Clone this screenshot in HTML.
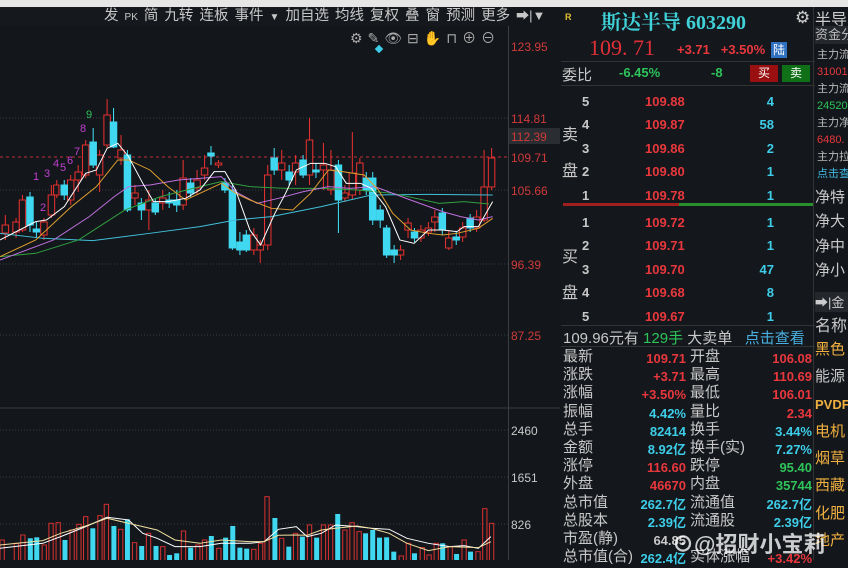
<!DOCTYPE html>
<html><head><meta charset="utf-8"><style>
*{margin:0;padding:0;box-sizing:border-box}
body{width:848px;height:560px;overflow:hidden;background:#13161b;font-family:"Liberation Sans","Noto Sans CJK SC",sans-serif;position:relative}
.a{position:absolute;white-space:nowrap}
.cn{font-family:"Liberation Sans","Noto Sans CJK SC",sans-serif}
.r{color:#e8383d}.g{color:#2ec45a}.c{color:#3dcde8}.w{color:#c8c8c8}.o{color:#f0b040}
.num{font-weight:bold;font-size:13px}
</style></head><body>
<div class="a" style="left:0;top:0;width:848px;height:7px;background:#e6e6e6"></div>
<div class="a" style="left:0;top:7px;width:508px;height:19px;background:#15181d"></div>
<div class="a w cn" style="left:104px;top:4px;font-size:14.5px;color:#c8c8c8;word-spacing:2px">发 <span style="font-size:10px">PK</span> 简 九转 连板 事件 <span style="font-size:10px">▼</span> 加自选 均线 复权 叠 窗 预测 更多 <span style="font-size:13px">➡|▼</span></div>
<div class="a" style="left:350px;top:28px;font-size:14px;color:#aaa;letter-spacing:5px">⚙✎👁⊟✋⊓⊕⊖</div>
<div class="a" style="left:376px;top:46px;width:6px;height:6px;background:#3dcde8;transform:rotate(45deg)"></div>

<svg class="a" style="left:0;top:0" width="560" height="560">
<g stroke="#3a3d42" stroke-dasharray="1 2" stroke-width="1">
<line x1="0" y1="118" x2="508" y2="118"/><line x1="0" y1="190" x2="508" y2="190"/><line x1="0" y1="264" x2="508" y2="264"/><line x1="0" y1="335" x2="508" y2="335"/><line x1="0" y1="430" x2="508" y2="430"/><line x1="0" y1="477" x2="508" y2="477"/><line x1="0" y1="524" x2="508" y2="524"/>
</g>
<line x1="0" y1="157" x2="508" y2="157" stroke="#c03038" stroke-dasharray="3 3"/>
<line x1="0" y1="408" x2="560" y2="408" stroke="#3a3d42"/>
<line x1="508.5" y1="26" x2="508.5" y2="560" stroke="#3a3d42"/>
<line x1="560.5" y1="7" x2="560.5" y2="560" stroke="#3a3d42"/>
<rect x="509" y="128" width="51" height="16" fill="#2a2d32"/>
<g fill="#d03a3a" font-size="12" font-family="Liberation Sans">
<text x="511" y="51">123.95</text><text x="511" y="123">114.81</text><text x="511" y="141">112.39</text><text x="511" y="162">109.71</text><text x="511" y="195">105.66</text><text x="511" y="269">96.39</text><text x="511" y="340">87.25</text>
</g>
<g fill="#c8c8c8" font-size="12" font-family="Liberation Sans"><text x="511" y="435">2460</text><text x="511" y="482">1651</text><text x="511" y="529">826</text></g>
<g font-size="11" font-family="Liberation Sans" fill="#c040d0"><text x="33" y="180">1</text><text x="40" y="211">2</text><text x="44" y="177">3</text><text x="53" y="167">4</text><text x="60" y="171">5</text><text x="67" y="164">6</text><text x="74" y="155">7</text><text x="80" y="132">8</text><text x="86" y="118" fill="#2ec45a">9</text></g>
<g transform="scale(1.071,1)" stroke-width="1">
<g stroke="#e0302f" fill="#13161b">
<line x1="5" y1="215" x2="5" y2="240"/><rect x="2" y="225" width="6" height="8"/>
<line x1="15" y1="218" x2="15" y2="238"/><rect x="12" y="222" width="6" height="10"/>
<line x1="21" y1="195" x2="21" y2="232"/><rect x="18" y="200" width="6" height="30"/>
<line x1="41" y1="218" x2="41" y2="240"/><rect x="38" y="222" width="6" height="13"/>
<line x1="48" y1="185" x2="48" y2="218"/><rect x="45" y="195" width="6" height="20"/>
<line x1="53" y1="180" x2="53" y2="198"/><rect x="50" y="185" width="5" height="10"/>
<line x1="66" y1="175" x2="66" y2="205"/><rect x="63" y="180" width="6" height="20"/>
<line x1="73" y1="165" x2="73" y2="192"/><rect x="70" y="172" width="6" height="8"/>
<line x1="80" y1="140" x2="80" y2="178"/><rect x="77" y="145" width="6" height="30"/>
<line x1="93" y1="150" x2="93" y2="192"/><rect x="90" y="155" width="6" height="20"/>
<line x1="100" y1="99" x2="100" y2="148"/><rect x="97" y="115" width="6" height="30"/>
<line x1="113" y1="135" x2="113" y2="165"/><rect x="110" y="150" width="6" height="8"/>
<line x1="126" y1="185" x2="126" y2="205"/><rect x="123" y="193" width="6" height="5"/>
<line x1="139" y1="190" x2="139" y2="230"/><rect x="136" y="200" width="6" height="10"/>
<line x1="152" y1="190" x2="152" y2="210"/><rect x="149" y="198" width="6" height="5"/>
<line x1="171" y1="160" x2="171" y2="210"/><rect x="168" y="178" width="6" height="27"/>
<line x1="184" y1="170" x2="184" y2="195"/><rect x="181" y="180" width="6" height="8"/>
<line x1="191" y1="155" x2="191" y2="180"/><rect x="188" y="168" width="6" height="7"/>
<line x1="204" y1="160" x2="204" y2="168"/><rect x="201" y="163" width="6" height="2"/>
<line x1="237" y1="228" x2="237" y2="255"/><rect x="234" y="235" width="6" height="15"/>
<line x1="243" y1="240" x2="243" y2="263"/><rect x="240" y="245" width="6" height="5"/>
<line x1="250" y1="165" x2="250" y2="250"/><rect x="247" y="175" width="6" height="70"/>
<line x1="263" y1="150" x2="263" y2="180"/><rect x="260" y="163" width="6" height="7"/>
<line x1="276" y1="155" x2="276" y2="185"/><rect x="273" y="163" width="6" height="9"/>
<line x1="289" y1="118" x2="289" y2="185"/><rect x="286" y="140" width="6" height="35"/>
<line x1="302" y1="143" x2="302" y2="190"/><rect x="299" y="165" width="6" height="5"/>
<line x1="309" y1="150" x2="309" y2="195"/><rect x="306" y="170" width="6" height="20"/>
<line x1="322" y1="185" x2="322" y2="202"/><rect x="319" y="193" width="6" height="5"/>
<line x1="329" y1="132" x2="329" y2="200"/><rect x="326" y="173" width="6" height="22"/>
<line x1="336" y1="158" x2="336" y2="195"/><rect x="333" y="163" width="6" height="27"/>
<line x1="374" y1="245" x2="374" y2="260"/><rect x="371" y="250" width="6" height="5"/>
<line x1="381" y1="218" x2="381" y2="238"/><rect x="378" y="223" width="6" height="7"/>
<line x1="393" y1="225" x2="393" y2="242"/><rect x="390" y="230" width="6" height="8"/>
<line x1="400" y1="222" x2="400" y2="236"/><rect x="397" y="228" width="6" height="4"/>
<line x1="406" y1="210" x2="406" y2="232"/><rect x="403" y="217" width="6" height="5"/>
<line x1="419" y1="230" x2="419" y2="250"/><rect x="416" y="238" width="6" height="10"/>
<line x1="432" y1="222" x2="432" y2="242"/><rect x="429" y="228" width="6" height="9"/>
<line x1="445" y1="210" x2="445" y2="232"/><rect x="442" y="217" width="6" height="11"/>
<line x1="452" y1="150" x2="452" y2="222"/><rect x="449" y="187" width="6" height="33"/>
<line x1="459" y1="148" x2="459" y2="190"/><rect x="456" y="158" width="6" height="29"/>
</g>
<g fill="#3fd8f0" stroke="#3fd8f0">
<line x1="28" y1="192" x2="28" y2="232"/><rect x="25" y="197" width="6" height="28"/>
<line x1="34" y1="222" x2="34" y2="238"/><rect x="31" y="229" width="6" height="3"/>
<line x1="60" y1="180" x2="60" y2="200"/><rect x="57" y="185" width="6" height="10"/>
<line x1="87" y1="128" x2="87" y2="168"/><rect x="84" y="142" width="6" height="23"/>
<line x1="106" y1="108" x2="106" y2="148"/><rect x="103" y="122" width="6" height="25"/>
<line x1="119" y1="150" x2="119" y2="212"/><rect x="116" y="155" width="6" height="55"/>
<line x1="132" y1="198" x2="132" y2="220"/><rect x="129" y="203" width="6" height="7"/>
<line x1="145" y1="198" x2="145" y2="215"/><rect x="142" y="203" width="6" height="9"/>
<line x1="158" y1="192" x2="158" y2="208"/><rect x="155" y="200" width="6" height="3"/>
<line x1="165" y1="190" x2="165" y2="212"/><rect x="162" y="200" width="6" height="5"/>
<line x1="178" y1="178" x2="178" y2="197"/><rect x="175" y="183" width="6" height="10"/>
<line x1="197" y1="146" x2="197" y2="165"/><rect x="194" y="153" width="6" height="3"/>
<line x1="210" y1="178" x2="210" y2="193"/><rect x="207" y="183" width="6" height="7"/>
<line x1="217" y1="185" x2="217" y2="250"/><rect x="214" y="190" width="6" height="58"/>
<line x1="224" y1="232" x2="224" y2="255"/><rect x="221" y="242" width="6" height="8"/>
<line x1="230" y1="230" x2="230" y2="252"/><rect x="227" y="235" width="6" height="15"/>
<line x1="256" y1="148" x2="256" y2="175"/><rect x="253" y="158" width="6" height="12"/>
<line x1="270" y1="165" x2="270" y2="185"/><rect x="267" y="172" width="6" height="8"/>
<line x1="283" y1="155" x2="283" y2="178"/><rect x="280" y="160" width="6" height="15"/>
<line x1="295" y1="163" x2="295" y2="178"/><rect x="292" y="170" width="6" height="2"/>
<line x1="316" y1="160" x2="316" y2="233"/><rect x="313" y="165" width="6" height="35"/>
<line x1="342" y1="172" x2="342" y2="195"/><rect x="339" y="178" width="6" height="12"/>
<line x1="348" y1="172" x2="348" y2="225"/><rect x="345" y="178" width="6" height="42"/>
<line x1="355" y1="205" x2="355" y2="228"/><rect x="352" y="210" width="6" height="10"/>
<line x1="361" y1="225" x2="361" y2="258"/><rect x="358" y="228" width="6" height="27"/>
<line x1="368" y1="245" x2="368" y2="263"/><rect x="365" y="250" width="6" height="5"/>
<line x1="387" y1="228" x2="387" y2="242"/><rect x="384" y="232" width="6" height="6"/>
<line x1="413" y1="208" x2="413" y2="235"/><rect x="410" y="213" width="6" height="17"/>
<line x1="426" y1="232" x2="426" y2="245"/><rect x="423" y="237" width="6" height="3"/>
<line x1="439" y1="214" x2="439" y2="232"/><rect x="436" y="218" width="6" height="10"/>
</g>
</g>
<g transform="scale(0.357,0.3333)" fill="none" stroke-width="1">
<polyline vector-effect="non-scaling-stroke" stroke="#40c0d8" points="0,700 120,715 260,722 420,700 560,680 660,660 760,650 900,620 1040,585 1200,583 1380,585"/>
<polyline vector-effect="non-scaling-stroke" stroke="#30a040" points="0,770 100,760 220,720 350,630 450,590 560,560 620,545 700,560 800,565 900,565 1000,570 1100,580 1230,610 1300,605 1370,612"/>
<polyline vector-effect="non-scaling-stroke" stroke="#c070e0" points="0,780 150,720 250,650 320,590 360,560 420,555 500,540 560,535 620,530 660,575 720,610 780,595 850,575 920,560 980,565 1050,560 1150,600 1240,635 1290,650 1340,660 1380,650"/>
<polyline vector-effect="non-scaling-stroke" stroke="#e0a030" points="0,770 100,720 200,620 270,560 330,480 360,480 420,510 470,560 520,600 560,580 620,550 660,580 700,600 760,625 820,630 870,580 920,510 960,515 1020,525 1060,570 1100,640 1150,690 1200,700 1240,705 1280,700 1340,685 1380,655"/>
<polyline vector-effect="non-scaling-stroke" stroke="#ffffff" points="0,720 100,665 130,660 180,620 240,520 270,510 300,445 330,430 360,470 400,550 430,605 470,605 520,595 560,570 600,515 630,515 660,570 700,690 730,735 770,640 800,580 830,510 870,490 910,490 940,500 970,550 1010,550 1040,565 1080,620 1120,720 1160,730 1200,690 1240,690 1280,695 1300,680 1340,680 1380,605"/>
</g>
<g transform="translate(0,280) scale(0.357,0.3333)">
<g fill="none" stroke="#d03030" stroke-width="3">
<rect x="0" y="780" width="12" height="70"/><rect x="40" y="790" width="12" height="60"/><rect x="58" y="765" width="12" height="85"/><rect x="118" y="795" width="12" height="55"/><rect x="137" y="730" width="12" height="120"/><rect x="157" y="728" width="12" height="122"/><rect x="196" y="750" width="12" height="100"/><rect x="215" y="733" width="12" height="117"/><rect x="234" y="710" width="12" height="140"/><rect x="274" y="707" width="12" height="143"/><rect x="292" y="673" width="12" height="177"/><rect x="332" y="748" width="12" height="102"/><rect x="371" y="788" width="12" height="62"/><rect x="410" y="760" width="12" height="90"/><rect x="450" y="800" width="12" height="50"/><rect x="508" y="753" width="12" height="97"/><rect x="548" y="795" width="12" height="55"/><rect x="567" y="780" width="12" height="70"/><rect x="607" y="805" width="12" height="45"/><rect x="705" y="808" width="12" height="42"/><rect x="724" y="790" width="12" height="60"/><rect x="742" y="650" width="12" height="200"/><rect x="783" y="775" width="12" height="75"/><rect x="822" y="760" width="12" height="90"/><rect x="861" y="735" width="12" height="115"/><rect x="900" y="735" width="12" height="115"/><rect x="920" y="735" width="12" height="115"/><rect x="960" y="750" width="12" height="100"/><rect x="980" y="728" width="12" height="122"/><rect x="1000" y="755" width="12" height="95"/><rect x="1118" y="828" width="12" height="22"/><rect x="1138" y="790" width="12" height="60"/><rect x="1177" y="803" width="12" height="47"/><rect x="1196" y="825" width="12" height="25"/><rect x="1216" y="790" width="12" height="60"/><rect x="1255" y="800" width="12" height="50"/><rect x="1294" y="780" width="12" height="70"/><rect x="1333" y="815" width="12" height="35"/><rect x="1352" y="686" width="12" height="164"/><rect x="1371" y="730" width="12" height="120"/>
</g>
<g fill="#3fd8f0">
<rect x="78" y="775" width="14" height="75"/><rect x="96" y="772" width="14" height="78"/><rect x="175" y="780" width="14" height="70"/><rect x="253" y="745" width="14" height="105"/><rect x="312" y="738" width="14" height="112"/><rect x="350" y="718" width="14" height="132"/><rect x="390" y="798" width="14" height="52"/><rect x="430" y="798" width="14" height="52"/><rect x="468" y="825" width="14" height="25"/><rect x="488" y="820" width="14" height="30"/><rect x="527" y="803" width="14" height="47"/><rect x="585" y="768" width="14" height="82"/><rect x="625" y="773" width="14" height="77"/><rect x="645" y="738" width="14" height="112"/><rect x="665" y="803" width="14" height="47"/><rect x="684" y="806" width="14" height="44"/><rect x="763" y="714" width="14" height="136"/><rect x="802" y="800" width="14" height="50"/><rect x="840" y="770" width="14" height="80"/><rect x="880" y="773" width="14" height="77"/><rect x="939" y="702" width="14" height="148"/><rect x="1017" y="760" width="14" height="90"/><rect x="1037" y="750" width="14" height="100"/><rect x="1056" y="773" width="14" height="77"/><rect x="1076" y="772" width="14" height="78"/><rect x="1096" y="815" width="14" height="35"/><rect x="1154" y="820" width="14" height="30"/><rect x="1233" y="790" width="14" height="60"/><rect x="1272" y="822" width="14" height="28"/><rect x="1311" y="815" width="14" height="35"/>
</g>
<polyline vector-effect="non-scaling-stroke" fill="none" stroke="#ffffff" points="0,805 120,790 170,770 240,740 300,712 360,720 400,760 440,775 490,800 560,800 620,790 700,790 740,785 780,748 830,740 860,770 900,760 940,735 1000,740 1040,745 1090,748 1140,775 1200,790 1260,800 1300,797 1340,805 1375,770"/>
<polyline vector-effect="non-scaling-stroke" fill="none" stroke="#f0e0a0" points="0,795 120,782 170,760 240,738 300,715 360,730 400,740 440,750 490,780 560,790 620,780 700,785 740,785 780,766 830,765 860,766 900,750 940,745 1000,738 1040,745 1090,760 1140,790 1200,812 1260,800 1340,803 1375,785"/>
</g>
</svg>

<!-- right panel -->
<div class="a" style="left:561px;top:7px;width:254px;height:553px;background:#14171c"></div>
<div class="a" style="left:565px;top:12px;font-size:9px;color:#e0c030;font-weight:bold">R</div>
<div class="a c" style="left:601px;top:6px;font-size:20px;font-weight:bold;font-family:'Liberation Serif','Noto Serif CJK SC',serif;color:#40d0d8">斯达半导 603290</div>
<div class="a" style="left:795px;top:8px;font-size:17px;color:#ccc">⚙</div>
<div class="a r" style="left:589px;top:35px;font-size:22px;font-family:'Liberation Serif',serif;color:#e03038">109. 71</div>
<div class="a r" style="left:677px;top:42px;font-size:13px;font-weight:bold">+3.71&nbsp;&nbsp;&nbsp;+3.50%</div>
<div class="a" style="left:771px;top:42px;width:16px;height:16px;background:#3070c0;color:#fff;font-size:12px;text-align:center;line-height:16px">陆</div>
<div class="a" style="left:561px;top:61px;width:254px;height:1px;background:#333"></div>
<div class="a w" style="left:562px;top:64px;font-size:15px">委比</div>
<div class="a g" style="left:619px;top:65px;font-size:13px;font-weight:bold">-6.45%</div>
<div class="a g" style="left:711px;top:65px;font-size:13px;font-weight:bold">-8</div>
<div class="a" style="left:750px;top:65px;width:28px;height:17px;background:#9a1010;color:#fff;font-size:12px;text-align:center;line-height:17px">买</div>
<div class="a" style="left:782px;top:65px;width:28px;height:17px;background:#107018;color:#fff;font-size:12px;text-align:center;line-height:17px">卖</div>
<div class="a" style="left:561px;top:85px;width:254px;height:1px;background:#333"></div>
<div class="a w" style="left:562px;top:118px;font-size:16px;line-height:36px">卖<br>盘</div>
<div class="a w" style="left:562px;top:240px;font-size:16px;line-height:36px">买<br>盘</div>
<div class="a num w" style="left:582px;top:90px;line-height:23.4px">5<br>4<br>3<br>2<br>1</div>
<div class="a num r" style="left:645px;top:90px;line-height:23.4px">109.88<br>109.87<br>109.86<br>109.80<br>109.78</div>
<div class="a num c" style="left:740px;top:90px;width:34px;text-align:right;line-height:23.4px">4<br>58<br>2<br>1<br>1</div>
<div class="a" style="left:563px;top:203px;width:116px;height:3px;background:#a02020"></div>
<div class="a" style="left:679px;top:203px;width:134px;height:3px;background:#28902c"></div>
<div class="a num w" style="left:582px;top:211px;line-height:23.4px">1<br>2<br>3<br>4<br>5</div>
<div class="a num r" style="left:645px;top:211px;line-height:23.4px">109.72<br>109.71<br>109.70<br>109.68<br>109.67</div>
<div class="a num c" style="left:740px;top:211px;width:34px;text-align:right;line-height:23.4px">1<br>1<br>47<br>8<br>1</div>
<div class="a" style="left:561px;top:325px;width:254px;height:1px;background:#333"></div>
<div class="a" style="left:563px;top:327px;font-size:15px;color:#c8c8c8">109.96元有 <span class="g">129手</span> 大卖单&nbsp;&nbsp;&nbsp;<span class="c" style="color:#4ab0e0">点击查看</span></div>
<div class="a" style="left:561px;top:346px;width:254px;height:1px;background:#333"></div>
<div class="a w" style="left:563px;top:348px;font-size:15px;line-height:18.2px">最新<br>涨跌<br>涨幅<br>振幅<br>总手<br>金额<br>涨停<br>外盘<br>总市值<br>总股本<br>市盈(静)<br>总市值(合)</div>
<div class="a num" style="left:606px;top:350px;width:80px;text-align:right;line-height:18.2px"><span class="r">109.71</span><br><span class="r">+3.71</span><br><span class="r">+3.50%</span><br><span class="c">4.42%</span><br><span class="c">82414</span><br><span class="c">8.92亿</span><br><span class="r">116.60</span><br><span class="r">46670</span><br><span class="c">262.7亿</span><br><span class="c">2.39亿</span><br><span class="w">64.85</span><br><span class="c">262.4亿</span></div>
<div class="a w" style="left:690px;top:348px;font-size:15px;line-height:18.2px">开盘<br>最高<br>最低<br>量比<br>换手<br>换手(实)<br>跌停<br>内盘<br>流通值<br>流通股<br>&nbsp;<br>实体涨幅</div>
<div class="a num" style="left:732px;top:350px;width:80px;text-align:right;line-height:18.2px"><span class="r">106.08</span><br><span class="r">110.69</span><br><span class="r">106.01</span><br><span class="r">2.34</span><br><span class="c">3.44%</span><br><span class="c">7.27%</span><br><span class="g">95.40</span><br><span class="g">35744</span><br><span class="c">262.7亿</span><br><span class="c">2.39亿</span><br>&nbsp;<br><span class="r">+3.42%</span></div>
<div class="a" style="left:813px;top:7px;width:1px;height:553px;background:#333"></div>
<!-- third column -->
<div class="a" style="left:815px;top:6px;font-size:16px;color:#ccc">半导</div>
<div class="a" style="left:815px;top:26px;width:33px;height:18px;background:#24272c;color:#bbb;font-size:13px;line-height:18px">资金分</div>
<div class="a" style="left:817px;top:47px;font-size:11px;line-height:17px;color:#bbb">主力流<br><span class="r">31001</span><br>主力流<br><span class="g">24520</span><br>主力净<br><span class="r">6480.</span><br>主力拉<br><span style="color:#40b8e0">点击查</span></div>
<div class="a w" style="left:815px;top:186px;font-size:15px;line-height:24.3px">净特<br>净大<br>净中<br>净小</div>
<div class="a" style="left:815px;top:292px;width:33px;height:20px;background:#24272c;color:#ccc;font-size:13px">➡|金</div>
<div class="a w" style="left:815px;top:312px;font-size:16px">名称</div>
<div class="a" style="left:815px;top:336px;font-size:15px;line-height:27.3px"><span class="o">黑色</span><br><span class="w">能源</span><br><span class="o" style="font-weight:bold;font-size:13px">PVDF</span><br><span class="o">电机</span><br><span class="o">烟草</span><br><span class="o">西藏</span><br><span class="o">化肥</span><br><span class="o">地产</span></div>
<!-- watermark -->
<div class="a" style="left:672px;top:527px;font-size:22px;color:rgba(255,255,255,0.78);font-weight:bold">⊙@招财小宝莉</div>
</body></html>
